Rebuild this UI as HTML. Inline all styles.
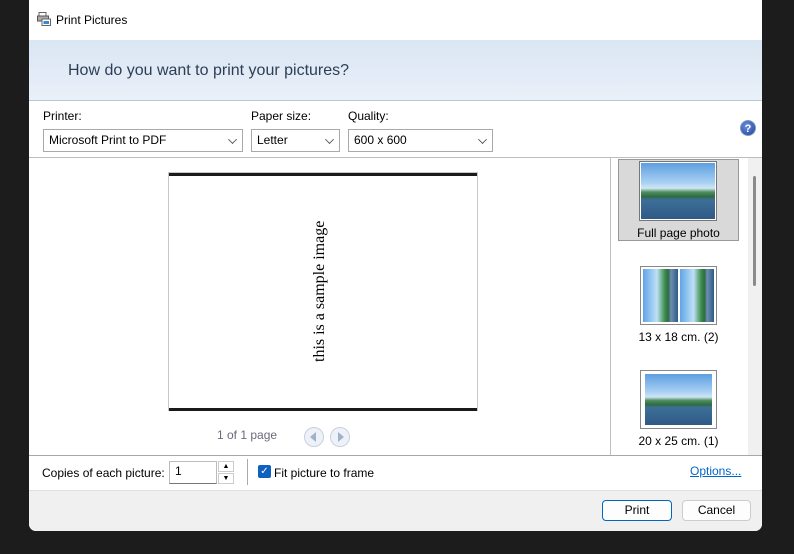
<!DOCTYPE html>
<html><head><style>
*{margin:0;padding:0;box-sizing:border-box}
body{width:794px;height:554px;background:#1c1c1c;position:relative;overflow:hidden;font-family:"Segoe UI","Liberation Sans",sans-serif;font-size:12px;color:#000}
.a{position:absolute}
.win{left:29px;top:0;width:733px;height:531px;background:#fff;border-radius:0 0 7px 7px;overflow:hidden}
.sel{border:1px solid #a9a9a9;background:#fff;height:23px;font-size:12px;padding:3px 0 0 5px}
.chev{position:absolute;right:6px;top:6px;width:7px;height:7px;border-right:1px solid #555;border-bottom:1px solid #555;transform:rotate(45deg) scale(.9)}
.photo{background:linear-gradient(180deg,#5d9fe0 0%,#a9d0f2 35%,#cfe6f5 45%,#4d8f5a 52%,#2f6a45 60%,#3d6f98 66%,#2f5a86 100%)}
.photo2{background:linear-gradient(90deg,#5fa4e6 0%,#bfe0f7 40%,#3f8f4e 62%,#2f6a45 72%,#6b8fb0 80%,#2f5a86 100%)}
</style></head><body>
<div class="a win">
 <svg class="a" style="left:8px;top:12px" width="14" height="14" viewBox="0 0 14 14"><rect x="2" y="0.5" width="7" height="4" fill="#fff" stroke="#666"/><rect x="0.5" y="4" width="11" height="5" fill="#aaa" stroke="#555"/><rect x="5" y="7" width="8.5" height="6.5" fill="#fff" stroke="#666"/><rect x="6.5" y="9" width="5.5" height="3" fill="#3a8ad0"/></svg>
 <div class="a" style="left:27px;top:13px;font-size:12px">Print Pictures</div>
 <div class="a" style="left:0;top:40px;width:733px;height:61px;background:linear-gradient(180deg,#dae6f3,#e9f0f9);border-bottom:1px solid #b9c8da"></div>
 <div class="a" style="left:39px;top:62px;font-size:16px;color:#2d3e55">How do you want to print your pictures?</div>
 <div class="a" style="left:14px;top:109px">Printer:</div>
 <div class="a" style="left:222px;top:109px">Paper size:</div>
 <div class="a" style="left:319px;top:109px">Quality:</div>
 <div class="a sel" style="left:14px;top:129px;width:200px">Microsoft Print to PDF<span class="chev"></span></div>
 <div class="a sel" style="left:222px;top:129px;width:89px">Letter<span class="chev"></span></div>
 <div class="a sel" style="left:319px;top:129px;width:145px">600 x 600<span class="chev"></span></div>
 <div class="a" style="left:711px;top:120px;width:16px;height:16px;border-radius:50%;background:radial-gradient(circle at 40% 35%,#6b8fe0,#1e3f9e);color:#fff;font-weight:bold;font-size:11px;text-align:center;line-height:16px;border:1px solid #8899bb">?</div>
 <div class="a" style="left:0;top:157px;width:733px;height:1px;background:#bdbdbd"></div>
 <div class="a" style="left:139px;top:172px;width:310px;height:239px;border:1px solid #c8c8c8;background:#fff"></div>
 <div class="a" style="left:140px;top:173px;width:308px;height:3px;background:#1a1a1a"></div>
 <div class="a" style="left:140px;top:408px;width:308px;height:3px;background:#1a1a1a"></div>
 <div class="a" style="left:222px;top:282px;width:140px;height:20px;transform:rotate(-90deg);font-family:'Liberation Serif',serif;font-size:16px;text-align:center;white-space:nowrap">this is a sample image</div>
 <div class="a" style="left:188px;top:428px;color:#6a6a7a">1 of 1 page</div>
 <div class="a" style="left:275px;top:427px;width:20px;height:20px;border-radius:50%;border:1px solid #c8d0dc;background:#eef2f8"></div>
 <div class="a" style="left:281px;top:432px;width:0;height:0;border-top:5px solid transparent;border-bottom:5px solid transparent;border-right:6px solid #9fb2cc"></div>
 <div class="a" style="left:301px;top:427px;width:20px;height:20px;border-radius:50%;border:1px solid #c8d0dc;background:#eef2f8"></div>
 <div class="a" style="left:309px;top:432px;width:0;height:0;border-top:5px solid transparent;border-bottom:5px solid transparent;border-left:6px solid #9fb2cc"></div>
 <div class="a" style="left:581px;top:158px;width:1px;height:297px;background:#c0c0c0"></div>
 <div class="a" style="left:719px;top:158px;width:14px;height:297px;background:#f0f0f0"></div>
 <div class="a" style="left:724px;top:176px;width:3px;height:110px;background:#8a8a8a;border-radius:2px"></div>
 <div class="a" style="left:589px;top:159px;width:121px;height:82px;background:#d9d9d9;border:1px solid #999"></div>
 <div class="a" style="left:610px;top:161px;width:78px;height:60px;border:1px solid #777;background:#fff;padding:1px"><div class="photo" style="width:100%;height:100%"></div></div>
 <div class="a" style="left:589px;top:226px;width:121px;text-align:center">Full page photo</div>
 <div class="a" style="left:611px;top:266px;width:77px;height:59px;border:1px solid #888;background:#fff;padding:2px;display:flex;gap:2px"><div class="photo2" style="flex:1"></div><div class="photo2" style="flex:1"></div></div>
 <div class="a" style="left:589px;top:330px;width:121px;text-align:center">13 x 18 cm. (2)</div>
 <div class="a" style="left:611px;top:370px;width:77px;height:59px;border:1px solid #888;background:#fff;padding:3px 4px"><div class="photo" style="width:100%;height:100%"></div></div>
 <div class="a" style="left:589px;top:434px;width:121px;text-align:center">20 x 25 cm. (1)</div>
 <div class="a" style="left:0;top:455px;width:733px;height:1px;background:#a8a8a8"></div>
 <div class="a" style="left:13px;top:466px">Copies of each picture:</div>
 <div class="a" style="left:140px;top:461px;width:48px;height:23px;border:1px solid #bbb;border-bottom:1px solid #777;padding:2px 5px">1</div>
 <div class="a" style="left:189px;top:461px;width:16px;height:11px;border:1px solid #ccc;font-size:7px;text-align:center;line-height:10px">▲</div>
 <div class="a" style="left:189px;top:473px;width:16px;height:11px;border:1px solid #ccc;font-size:7px;text-align:center;line-height:10px">▼</div>
 <div class="a" style="left:218px;top:459px;width:1px;height:26px;background:#aaa"></div>
 <div class="a" style="left:229px;top:465px;width:13px;height:13px;background:#1060c0;border-radius:2px;color:#fff;font-size:10px;line-height:13px;text-align:center">✓</div>
 <div class="a" style="left:245px;top:466px">Fit picture to frame</div>
 <div class="a" style="left:661px;top:464px;color:#0066cc;text-decoration:underline">Options...</div>
 <div class="a" style="left:0;top:490px;width:733px;height:41px;background:#f0f0f0;border-top:1px solid #e0e0e0"></div>
 <div class="a" style="left:573px;top:500px;width:70px;height:21px;background:#fdfdfd;border:1px solid #0067c0;border-radius:4px;text-align:center;line-height:19px">Print</div>
 <div class="a" style="left:653px;top:500px;width:69px;height:21px;background:#fdfdfd;border:1px solid #ccc;border-radius:4px;text-align:center;line-height:19px">Cancel</div>
</div>
</body></html>
